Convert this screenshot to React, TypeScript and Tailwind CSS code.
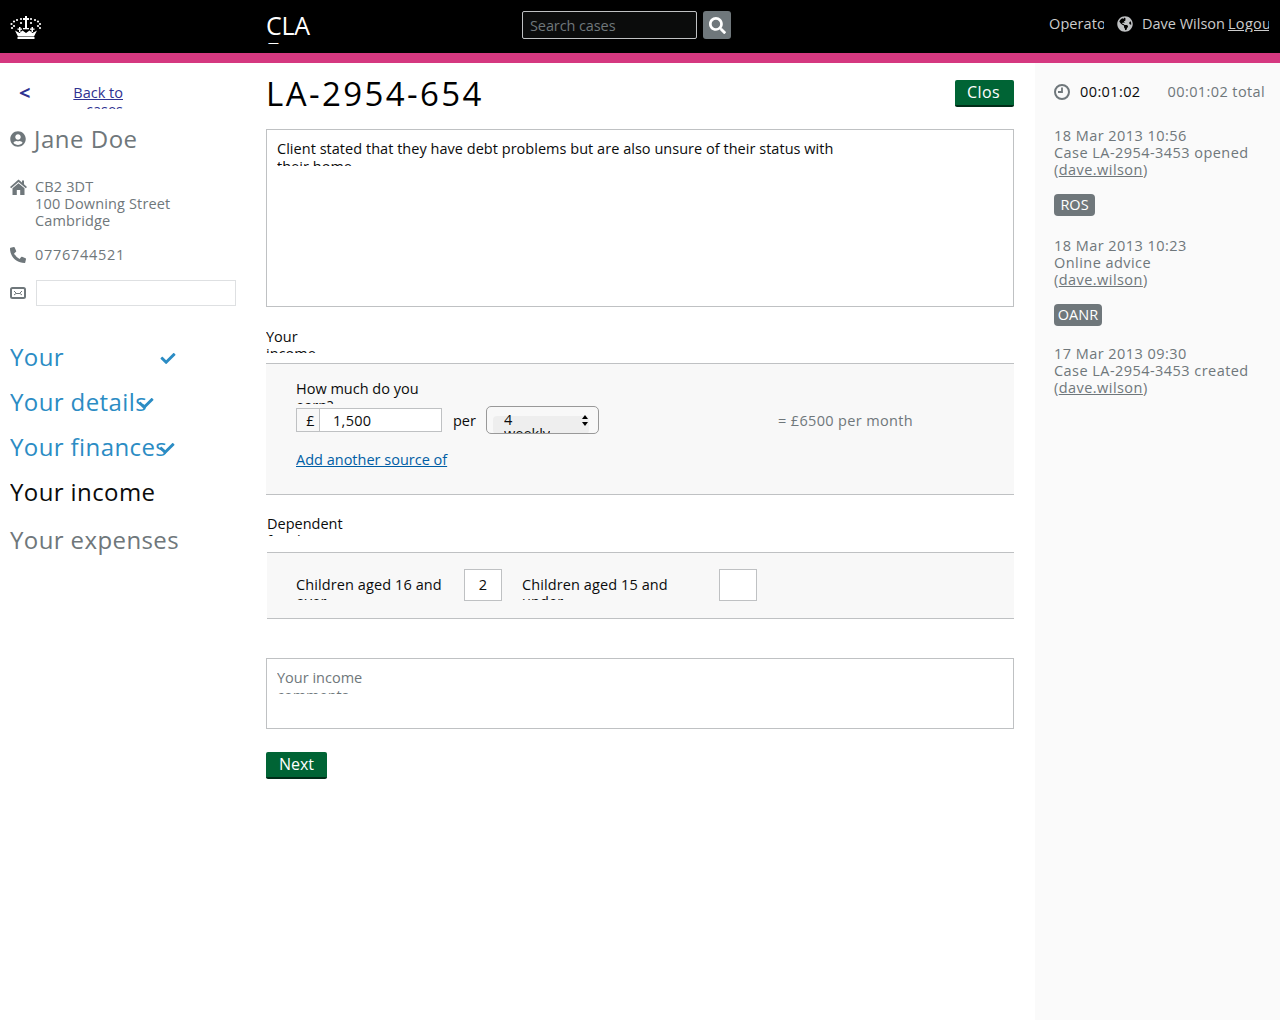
import { FaCheck, FaGlobeAmericas, FaPhoneAlt, FaSearch, FaUserCircle } from "react-icons/fa"

const font = "[font-family:'Open_Sans',sans-serif]"

function Crown() {
  return (
    <svg viewBox="0 0 32 24" className="h-[24px] w-[32px]" fill="#fff">
      <path d="M5 15.5 L8 21.5 H24 L27 15.5 L22.5 18 L19.5 15.5 L16 18 L12.5 15.5 L9.5 18 Z" />
      <rect x="7.5" y="22" width="17" height="2" />
      <rect x="15" y="1" width="2" height="13" />
      <rect x="13" y="3" width="6" height="2" />
      <rect x="9" y="12" width="1.5" height="5" />
      <rect x="21.5" y="12" width="1.5" height="5" />
      <rect x="7.5" y="13.5" width="4.5" height="1.3" />
      <rect x="20" y="13.5" width="4.5" height="1.3" />
      <rect x="13" y="13" width="6" height="1.3" />
      {[[1.5,9],[2,13],[4,6.5],[7,5],[11,4],[21,4],[25,5],[28,6.5],[30,9],[30,13],[11,8],[21,8],[4,11],[28,11]].map(([cx, cy]) => (
        <circle key={`${cx}-${cy}`} cx={cx} cy={cy} r="1.1" />
      ))}
    </svg>
  )
}

function Header() {
  return (
    <header className="flex h-[53px] items-start bg-black text-[#ccc]">
      <div className="w-[266px] pl-[10px] pt-[15px]">
        <Crown />
      </div>
      <div className="h-[44px] w-[60px] overflow-hidden pt-[12px] text-[25px] leading-[26px] text-white">
        <div className="w-[50px] tracking-[-0.3px]">CLA Frontend</div>
      </div>
      <div className="ml-[196px] mt-[11px] flex gap-[6px]">
        <div className="flex h-[28px] w-[175px] items-center rounded-[2px] border border-[#bfc1c3] bg-[#0b0c0c] px-[7px] text-[14.5px] leading-[28px] tracking-[-0.1px] text-[#6f777b]">
          <span className="pt-[1px]">Search cases</span>
        </div>
        <div className="flex h-[28px] w-[28px] items-center justify-center rounded-[3px] bg-[#6f777b] text-white">
          <FaSearch className="h-[17px] w-[17px]" />
        </div>
      </div>
      <div className="ml-auto flex items-center pr-[11px] pt-[15px] text-[14.5px] leading-[17px]">
        <span className="w-[55px] overflow-hidden whitespace-nowrap tracking-[0.1px]">Operator</span>
        <FaGlobeAmericas className="ml-[13px] h-[16px] w-[16px] text-[#bfc1c3]" />
        <span className="ml-[9px] w-[81px] whitespace-nowrap">Dave Wilson</span>
        <span className="ml-[5px] w-[41px] overflow-hidden whitespace-nowrap tracking-[0.3px] underline">Logout</span>
      </div>
    </header>
  )
}

function Home() {
  return (
    <svg viewBox="0 0 17 16" className="mt-[1px] h-[16px] w-[17px] shrink-0" fill="#6f777b">
      <path d="M8.5 0.5 L12 3.5 V1.5 H14 V5.2 L17 8 L15.8 9.2 L8.5 3 L1.2 9.2 L0 8 Z" />
      <path d="M2.5 9.2 L8.5 4.2 L14.5 9.2 V16 H10.2 V11 H6.8 V16 H2.5 Z" />
    </svg>
  )
}

function Envelope() {
  return (
    <svg viewBox="0 0 16 12" className="h-[12px] w-[16px]" fill="none" stroke="#6f777b">
      <rect x="1" y="1" width="14" height="10" rx="1.5" strokeWidth="2" />
      <path d="M4 4 L7 7 L8 6 L9 7 L12 4 M4 8 L6 6.5 M12 8 L10 6.5" strokeWidth="1" />
    </svg>
  )
}

function NavItem({ label, check, width, color, checkClass }: { label: string; check?: boolean; width: string; color: string; checkClass?: string }) {
  return (
    <div className="relative h-[45px] text-[24px] leading-[36px] tracking-[0.4px]">
      <div className={`${width} ${color} h-[35px] overflow-hidden`}>{label}</div>
      {check && <FaCheck className={`absolute h-[15px] w-[16px] text-[#2b8cc4] ${checkClass}`} />}
    </div>
  )
}

function Sidebar() {
  return (
    <aside className="w-[266px] shrink-0 pl-[10px]">
      <div className="mt-[20px] flex h-[24px] items-start text-[14.5px] text-[#2e3191]">
        <span className="ml-[9px] w-[45px] text-[20px] font-bold leading-[20px]">&lt;</span>
        <div className="mt-[1px] h-[25px] w-[59px] overflow-hidden pl-[6px] text-right leading-[17px] underline">Back to cases</div>
      </div>
      <div className="mt-[17px] flex items-center text-[24px] leading-[30px] tracking-[0.5px] text-[#6f777b]">
        <FaUserCircle className="mr-[8px] h-[16px] w-[16px]" />
        Jane Doe
      </div>
      <div className="mt-[24px] flex text-[14.5px] leading-[17px] tracking-[0.15px] text-[#6f777b]">
        <Home />
        <div className="ml-[8px]">
          CB2 3DT
          <br />
          100 Downing Street
          <br />
          Cambridge
        </div>
      </div>
      <div className="mt-[17px] flex text-[14.5px] leading-[17px] tracking-[0.7px] text-[#6f777b]">
        <FaPhoneAlt className="mt-[1px] h-[16px] w-[16px]" />
        <span className="ml-[9px]">0776744521</span>
      </div>
      <div className="mt-[17px] flex items-center">
        <Envelope />
        <div className="ml-[10px] h-[26px] w-[200px] border border-[#dee0e2] bg-white" />
      </div>
      <nav className="mt-[33px]">
        <NavItem label="Your problem" width="w-[100px]" color="text-[#2b8cc4]" check checkClass="left-[150px] top-[12px]" />
        <NavItem label="Your details" width="w-[190px]" color="text-[#2b8cc4]" check checkClass="left-[128px] top-[12px]" />
        <NavItem label="Your finances" width="w-[190px]" color="text-[#2b8cc4]" check checkClass="left-[149px] top-[12px]" />
        <NavItem label="Your income" width="w-[190px]" color="text-[#0b0c0c]" />
        <div className="mt-[3px] text-[24px] leading-[36px] tracking-[0.4px] text-[#6f777b]">Your expenses</div>
      </nav>
    </aside>
  )
}

function Main() {
  return (
    <main className="w-[748px] shrink-0 text-[14.5px] text-[#0b0c0c]">
      <div className="mt-[14px] flex items-start justify-between">
        <h1 className="text-[33px] leading-[34px] tracking-[2.4px] text-black">LA-2954-654</h1>
        <div className="mt-[3px] h-[27px] w-[59px] rounded-[2px] border-b-2 border-[#002d18] bg-[#006435] pl-[12px] text-[16px] leading-[24px] text-white">
          <div className="w-[33px] overflow-hidden whitespace-nowrap tracking-[0.4px]">Close case</div>
        </div>
      </div>
      <div className="mt-[18px] h-[178px] border border-[#bfc1c3] pl-[10px] pr-[170px] pt-[10px]">
        <div className="h-[26px] overflow-hidden leading-[18px] tracking-[0.03px]">
          Client stated that they have debt problems but are also unsure of their status with their home
        </div>
      </div>
      <div className="mt-[21px] h-[25px] w-[60px] overflow-hidden leading-[17px]">Your income</div>
      <div className="mt-[10px] h-[132px] border-y border-[#bfc1c3] bg-[#f8f8f8] pl-[30px]">
        <div className="mb-[4px] mt-[16px] h-[24px] w-[140px] overflow-hidden leading-[17px]">How much do you earn?</div>
        <div className="flex items-start">
          <div className="flex h-[24px] w-[146px] border border-[#bfc1c3] bg-white leading-[24px]">
            <div className="w-[23px] border-r border-[#bfc1c3] bg-[#f8f8f8] pl-[5px] text-center">£</div>
            <div className="pl-[13px] tracking-[0.3px]">1,500</div>
          </div>
          <span className="ml-[11px] w-[22px] leading-[26px]">per</span>
          <div className="relative ml-[11px] mt-[-2px] h-[28px] w-[113px] overflow-hidden rounded-[5px] border border-[#999]">
            <div className="absolute left-[6px] top-[9px] h-[18px] w-[96px] rounded-[4px] bg-[#eee]" />
            <div className="absolute left-[17px] top-[6px] h-[21px] w-[46px] overflow-hidden leading-[14px]">4 weekly</div>
            <div className="absolute right-[10px] top-[8px] flex flex-col gap-[3px]">
              <div className="h-0 w-0 border-x-[3px] border-b-[4px] border-x-transparent border-b-black" />
              <div className="h-0 w-0 border-x-[3px] border-t-[4px] border-x-transparent border-t-black" />
            </div>
          </div>
          <span className="ml-[179px] leading-[26px] tracking-[0.35px] text-[#6f777b]">= £6500 per month</span>
        </div>
        <div className="mt-[16px] h-[25px] w-[155px] overflow-hidden leading-[20px] text-[#005ea5] underline">Add another source of income</div>
      </div>
      <div className="ml-[1px] mt-[20px] h-[21px] w-[80px] overflow-hidden leading-[17px]">Dependent family</div>
      <div className="ml-[1px] mt-[16px] flex h-[67px] items-center border-y border-[#bfc1c3] bg-[#f8f8f8] pl-[29px]">
        <div className="mt-[5px] h-[24px] w-[168px] overflow-hidden leading-[17px] tracking-[0.1px]">Children aged 16 and over</div>
        <div className="mb-[1px] flex h-[32px] w-[38px] items-center justify-center border border-[#bfc1c3] bg-white">2</div>
        <div className="ml-[20px] mt-[5px] h-[24px] w-[197px] overflow-hidden pr-[40px] leading-[17px] tracking-[0.1px]">Children aged 15 and under</div>
        <div className="mb-[1px] h-[32px] w-[38px] border border-[#bfc1c3] bg-white" />
      </div>
      <div className="mt-[39px] h-[71px] border border-[#bfc1c3] pl-[10px] pt-[10px]">
        <div className="h-[25px] w-[110px] overflow-hidden leading-[18px] text-[#6f777b]">Your income comments</div>
      </div>
      <div className="mt-[23px] h-[27px] w-[61px] rounded-[2px] border-b-2 border-[#002d18] bg-[#006435] text-center text-[16px] leading-[24px] text-white">
        Next
      </div>
    </main>
  )
}

function Entry({ date, text }: { date: string; text: string }) {
  return (
    <div className="text-[14.5px] leading-[17px] tracking-[0.45px] text-[#6f777b]">
      {date}
      <br />
      {text}
      <br />(<span className="underline">dave.wilson</span>)
    </div>
  )
}

function Badge({ label, size }: { label: string; size: string }) {
  return <div className={`${size} mt-[16px] h-[22px] rounded-[4px] bg-[#6f777b] text-center text-[14.5px] leading-[21px] text-white`}>{label}</div>
}

function Timeline() {
  return (
    <aside className="ml-[21px] flex-1 self-stretch bg-[#fafafa] pl-[19px] pt-[20px]">
      <div className="flex h-[18px] items-center whitespace-nowrap text-[14.5px] tracking-[0.4px] text-[#6f777b]">
        <svg viewBox="0 0 16 16" className="h-[16px] w-[16px]" fill="none" stroke="#6f777b" strokeWidth="2">
          <circle cx="8" cy="8" r="7" />
          <path d="M8 3.5 V8 H4" strokeWidth="1.8" />
        </svg>
        <span className="ml-[10px] text-[#0b0c0c]">00:01:02</span>
        <span className="ml-[27px]">00:01:02 total</span>
      </div>
      <div className="mt-[26px]">
        <Entry date="18 Mar 2013 10:56" text="Case LA-2954-3453 opened" />
        <Badge label="ROS" size="mb-[21px] w-[41px]" />
        <Entry date="18 Mar 2013 10:23" text="Online advice" />
        <Badge label="OANR" size="mb-[19px] w-[48px]" />
        <Entry date="17 Mar 2013 09:30" text="Case LA-2954-3453 created" />
      </div>
    </aside>
  )
}

export default function App() {
  return (
    <div className={`${font} flex h-[1020px] flex-col overflow-hidden bg-white`}>
      <Header />
      <div className="h-[10px] bg-[#d53880]" />
      <div className="flex flex-1">
        <Sidebar />
        <Main />
        <Timeline />
      </div>
    </div>
  )
}
